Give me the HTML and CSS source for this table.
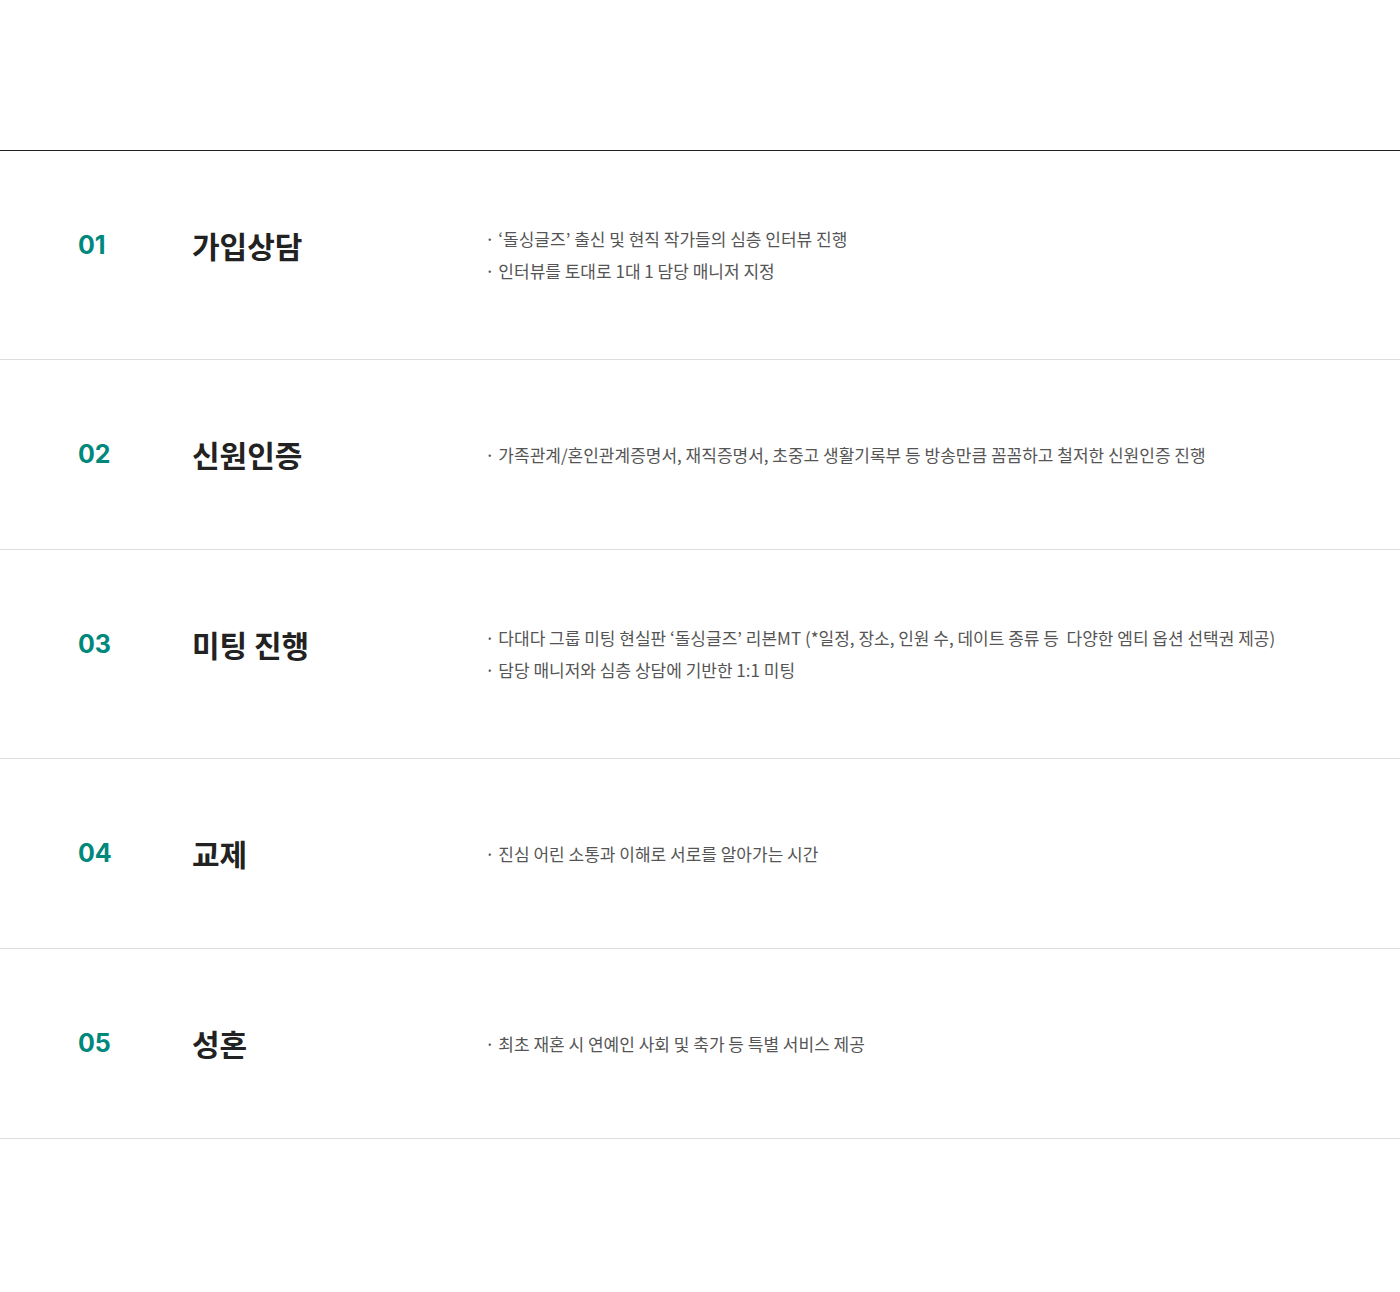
FILE: index.html
```html
<!DOCTYPE html>
<html>
<head>
    <title>진행 과정</title>
    <link rel="stylesheet" href="styles.css">
</head>
<body>
    <div class="process">
        <div class="step">
            <div class="step-num">01</div>
            <div class="step-title">가입상담</div>
            <ul class="step-desc">
                <li>‘돌싱글즈’ 출신 및 현직 작가들의 심층 인터뷰 진행</li>
                <li>인터뷰를 토대로 1대 1 담당 매니저 지정</li>
            </ul>
        </div>
        <div class="step">
            <div class="step-num">02</div>
            <div class="step-title">신원인증</div>
            <ul class="step-desc">
                <li>가족관계/혼인관계증명서, 재직증명서, 초중고 생활기록부 등 방송만큼 꼼꼼하고 철저한 신원인증 진행</li>
            </ul>
        </div>
        <div class="step">
            <div class="step-num">03</div>
            <div class="step-title">미팅 진행</div>
            <ul class="step-desc">
                <li>다대다 그룹 미팅 현실판 ‘돌싱글즈’ 리본MT (*일정, 장소, 인원 수, 데이트 종류 등&nbsp; 다양한 엠티 옵션 선택권 제공)</li>
                <li>담당 매니저와 심층 상담에 기반한 1:1 미팅</li>
            </ul>
        </div>
        <div class="step">
            <div class="step-num">04</div>
            <div class="step-title">교제</div>
            <ul class="step-desc">
                <li>진심 어린 소통과 이해로 서로를 알아가는 시간</li>
            </ul>
        </div>
        <div class="step">
            <div class="step-num">05</div>
            <div class="step-title">성혼</div>
            <ul class="step-desc">
                <li>최초 재혼 시 연예인 사회 및 축가 등 특별 서비스 제공</li>
            </ul>
        </div>
    </div>
</body>
</html>
```

FILE: styles.css
```css
body {
    margin: 0;
    background: #fff;
    font-family: "Noto Sans CJK KR", "Noto Sans", sans-serif;
}
.process {
    margin: 150px 0;
    border-top: 1px solid #222;
}
.step {
    display: flex;
    align-items: center;
    padding: 72px 0;
    border-bottom: 1px solid #ddd;
}
.step-num {
    align-self: flex-start;
    width: 114px;
    padding-left: 78px;
    font-family: "Inter", "Roboto", sans-serif;
    font-size: 25px;
    font-weight: 700;
    line-height: 45px;
    color: #00887c;
}
.step-title {
    align-self: flex-start;
    width: 293px;
    font-size: 30px;
    font-weight: 700;
    line-height: 45px;
    color: #222;
}
.step-desc {
    margin: 0;
    padding: 0;
    list-style: none;
    font-size: 17px;
    line-height: 32px;
    color: #555;
}
.step-desc li::before {
    content: "· ";
}
```
